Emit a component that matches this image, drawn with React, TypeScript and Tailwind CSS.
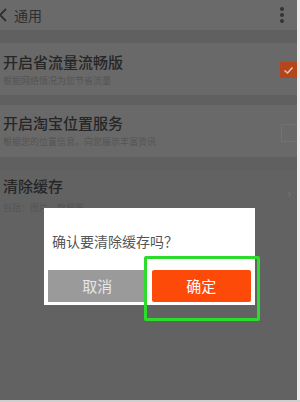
import React from 'react';

const font = { fontFamily: '"Noto Sans CJK SC", "Noto Sans", sans-serif' };

function Row({ title, sub, right, top }: { title: string; sub: string; right?: React.ReactNode; top: string }) {
  return (
    <div className={`flex h-[52px] items-start justify-between bg-[#696969] pl-[3px] ${top}`}>
      <div className="flex flex-col">
        <span className="text-[15px] font-medium leading-[18px] text-[#262626]">{title}</span>
        <span className="mt-[4px] text-[9px] leading-[11px] text-[#545454]">{sub}</span>
      </div>
      {right}
    </div>
  );
}

export default function App() {
  return (
    <div className="relative flex h-[402px] w-[300px] flex-col overflow-hidden bg-[#d8d8d8]" style={font}>
      <div className="flex h-[400px]">
        <div className="flex w-[297px] flex-col bg-[#626262]">
          {/* header */}
          <div className="flex h-[30px] items-center justify-between bg-[#6a6a6a]">
            <div className="flex items-center">
              <svg width="12" height="16" viewBox="0 0 12 16" className="ml-[-2px]">
                <path d="M8 2 L2 8 L8 14" fill="none" stroke="#2e2e2e" strokeWidth="1.8" />
              </svg>
              <span className="ml-[4px] text-[14px] leading-[16px] text-[#2e2e2e]">通用</span>
            </div>
            <div className="mr-[13px] flex flex-col gap-[2px]">
              <span className="h-[4px] w-[4px] rounded-full bg-[#333]" />
              <span className="h-[4px] w-[4px] rounded-full bg-[#333]" />
              <span className="h-[4px] w-[4px] rounded-full bg-[#333]" />
            </div>
          </div>
          <div className="h-[13px] bg-[#606060]" />
          <Row
            title="开启省流量流畅版"
            sub="根据网络情况为您节省流量"
            top="pt-[10px]"
            right={
              <div className="mt-[9px] flex h-[16px] w-[17px] items-center justify-center bg-[#b5461c]">
                <svg width="11" height="9" viewBox="0 0 11 9">
                  <path d="M1.5 4.5 L4.5 7 L9.5 1.5" fill="none" stroke="#e9c0ae" strokeWidth="1.6" />
                </svg>
              </div>
            }
          />
          <div className="h-[10px] bg-[#606060]" />
          <Row
            title="开启淘宝位置服务"
            sub="根据您的位置信息，向您展示丰富资讯"
            top="pt-[9px]"
            right={<div className="mt-[10px] h-[18px] w-[16px] border border-r-0 border-[#727272]" />}
          />
          <div className="h-[13px] bg-[#606060]" />
          <div className="flex flex-1 flex-col bg-[#626262] pl-[3px] pt-[7px]">
            <div className="flex items-start justify-between">
              <span className="text-[15px] font-medium leading-[18px] text-[#262626]">清除缓存</span>
              <span className="mr-[6px] mt-[10px] text-[12px] leading-[12px] text-[#777]">›</span>
            </div>
            <span className="mt-[3px] text-[9px] leading-[11px] text-[#545454]">包括：图片，数据等</span>
          </div>
        </div>
        <div className="w-[3px] bg-[#ececec]" />
      </div>
      <div className="h-[2px] bg-[#cfcfcf]" />

      {/* dialog */}
      <div className="absolute left-[44px] top-[208px] flex h-[97px] w-[211px] flex-col bg-white px-[4px]">
        <span className="mt-[25px] pl-[4px] text-[14px] leading-[17px] text-[#555]">确认要清除缓存吗？</span>
        <div className="mt-[20px] flex gap-[5px]">
          <div className="flex h-[32px] w-[99px] items-center justify-center bg-[#9a9a9a] text-[15px] text-[#e6e6e6]">取消</div>
          <div className="flex h-[32px] w-[100px] items-center justify-center rounded-[2px] bg-[#fd4a08] text-[15px] text-white">确定</div>
        </div>
      </div>
      <div className="absolute left-[144px] top-[256px] h-[65px] w-[116px] rounded-[2px] border-[3px] border-[#2bdc2b]" />
    </div>
  );
}
